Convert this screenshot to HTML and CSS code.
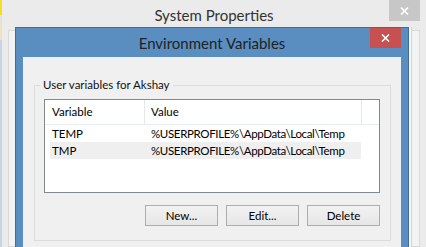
FILE: index.html
```html
<!DOCTYPE html>
<html lang="en">
<head>
    <meta charset="UTF-8">
    <meta name="viewport" content="width=device-width, initial-scale=1.0">
    <title>Environment Variables</title>
    <link rel="stylesheet" href="styles.css">
</head>
<body>
    <div class="desktop">
        <div class="edge">
            <div class="edge-yellow"></div>
            <div class="edge-gap"></div>
            <div class="edge-beige"></div>
            <div class="edge-rest"></div>
        </div>

        <div class="sysprops">
            <div class="sys-titlebar">
                <div class="sys-title">System Properties</div>
                <button class="close close-idle" aria-label="Close">
                    <svg width="9" height="8" viewBox="0 0 9 8"><path d="M1 0.5 L8 7.5 M8 0.5 L1 7.5" stroke="#fff" stroke-width="1.6"/></svg>
                </button>
            </div>
            <div class="sys-body">
                <div class="sys-panel"></div>
            </div>
        </div>

        <!-- dialog window over System Properties -->
        <div class="dialog">
            <div class="dlg-titlebar">
                <div class="dlg-title">Environment Variables</div>
                <button class="close close-red" aria-label="Close">
                    <svg width="9" height="8" viewBox="0 0 9 8"><path d="M1 0.5 L8 7.5 M8 0.5 L1 7.5" stroke="#fff" stroke-width="1.6"/></svg>
                </button>
            </div>
            <div class="dlg-content">
                <fieldset class="group">
                    <legend>User variables for Akshay</legend>
                    <div class="list">
                        <div class="list-head">
                            <div class="hcell hcell-name">Variable</div>
                            <div class="hcell hcell-value">Value</div>
                        </div>
                        <div class="row">
                            <div class="cell cell-name">TEMP</div>
                            <div class="cell cell-value">%USERPROFILE%\AppData\Local\Temp</div>
                        </div>
                        <div class="row row-selected">
                            <div class="cell cell-name">TMP</div>
                            <div class="cell cell-value">%USERPROFILE%\AppData\Local\Temp</div>
                        </div>
                    </div>
                    <div class="buttons">
                        <button class="btn">New...</button>
                        <button class="btn">Edit...</button>
                        <button class="btn">Delete</button>
                    </div>
                </fieldset>
            </div>
        </div>
    </div>
</body>
</html>
```

FILE: styles.css
```css
:root {
    --win-blue: #5a8ec0;
    --win-blue-dark: #3f6d9a;
    --face: #f0f0f0;
    --back: #ebebeb;
    --ui-font: "Segoe UI", Lato, "Noto Sans", sans-serif;
}

* {
    margin: 0;
    padding: 0;
    box-sizing: border-box;
}

body {
    width: 426px;
    height: 247px;
    overflow: hidden;
    background: var(--back);
    font-family: var(--ui-font);
    font-size: 11.5px;
    color: #000;
}

.desktop {
    display: flex;
    height: 247px;
    position: relative;
}

/* strip of the window behind, at the left edge */
.edge {
    width: 2px;
    display: flex;
    flex-direction: column;
}

.edge-yellow { height: 15px; background: #f5df1c; }
.edge-gap { height: 7px; background: #dfe3e8; }
.edge-beige { height: 18px; background: #efe0c2; }
.edge-rest { flex: 1; background: #c9d5e4; }

.sysprops {
    flex: 1;
    display: flex;
    flex-direction: column;
    background: var(--back);
}

.sys-titlebar {
    height: 30px;
    display: grid;
    grid-template-columns: 1fr auto 1fr;
    align-items: start;
    padding: 0 6px;
}

.sys-title {
    grid-column: 2;
    font-size: 15px;
    line-height: 20px;
    padding-top: 5px;
    color: #333;
}

.close {
    width: 31px;
    height: 20px;
    border: none;
    display: flex;
    align-items: center;
    justify-content: center;
}

.close-idle {
    grid-column: 3;
    justify-self: end;
    height: 21px;
    background: #c7c7c7;
}

.close-red {
    background: #c75050;
}

.sys-body {
    flex: 1;
    display: flex;
    padding: 0 6px 0 6px;
}

.sys-panel {
    flex: 1;
    border: 1px solid #d9d9d9;
    background: #f3f3f3;
}

.dialog {
    position: absolute;
    left: 15px;
    top: 27px;
    width: 394px;
    height: 240px;
    background: var(--win-blue);
    border: 1px solid var(--win-blue-dark);
    border-bottom: none;
    padding: 0 7px;
    display: flex;
    flex-direction: column;
    box-shadow: 2px 0 0 #f6f6f6, 3px 0 0 #d4d4d4;
}

.dlg-titlebar {
    height: 29px;
    display: flex;
    align-items: flex-start;
}

.dlg-title {
    flex: 1;
    text-align: center;
    font-size: 15px;
    line-height: 20px;
    padding-top: 5px;
    padding-left: 31px;
    color: #222;
}

.dlg-content {
    flex: 1;
    background: var(--face);
    padding: 20px 10px 0 11px;
}

.group {
    border: 1px solid #dcdcdc;
    padding: 0 10px 14px 9px;
}

.group legend {
    margin-left: -4px;
    padding: 0 3px;
    line-height: 16px;
    color: #111;
}

.list {
    margin-top: 6px;
    height: 94px;
    background: #fff;
    border: 1px solid #828790;
}

.list-head {
    display: flex;
    height: 25px;
    border-bottom: 1px solid #e6ecf3;
}

.hcell {
    flex-shrink: 0;
    line-height: 24px;
    padding-left: 7px;
    border-right: 1px solid #e3e8ee;
}

.hcell-name { width: 100px; }
.hcell-value { width: 217px; padding-left: 6px; }

.row {
    display: flex;
    height: 17px;
    line-height: 17px;
    margin-left: 5px;
    width: 311px;
}

.row-selected {
    background: #efefef;
}

.cell-name {
    flex-shrink: 0;
    width: 94px;
    padding-left: 2px;
}

.cell-value {
    padding-left: 7px;
    white-space: nowrap;
    letter-spacing: -0.35px;
}

.buttons {
    display: flex;
    justify-content: flex-end;
    gap: 8px;
    margin-top: 12px;
}

.btn {
    width: 73px;
    height: 21px;
    border: 1px solid #adadad;
    background: linear-gradient(#f2f2f2, #e6e6e6);
    font-family: var(--ui-font);
    font-size: 11.5px;
    color: #000;
}
```
